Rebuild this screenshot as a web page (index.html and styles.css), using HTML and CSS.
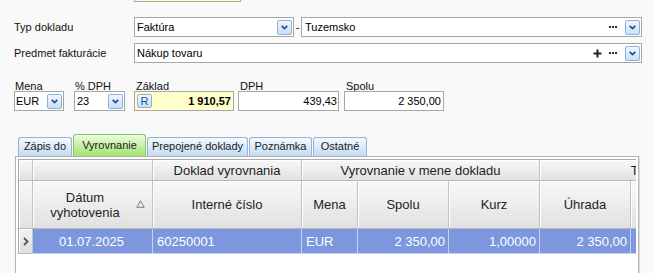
FILE: index.html
```html
<!DOCTYPE html>
<html lang="sk">
<head>
<meta charset="utf-8">
<title>Doklad</title>
<link rel="stylesheet" href="styles.css">
</head>
<body>
<div class="page">
  <div class="topbox"></div>

  <div class="frow r1">
    <div class="flabel">Typ dokladu</div>
    <div class="field w-typ">
      <span class="val">Faktúra</span>
      <span class="ddbtn"><svg width="7" height="5" viewBox="0 0 7 5"><path d="M0.7 0.8 L3.5 3.6 L6.3 0.8" fill="none" stroke="#1f4f9c" stroke-width="1.7"/></svg></span>
    </div>
    <span class="dash">-</span>
    <div class="field w-sub">
      <span class="val">Tuzemsko</span>
      <span class="dots"><svg width="8" height="2" viewBox="0 0 8 2"><rect x="0" y="0" width="2" height="2"/><rect x="3" y="0" width="2" height="2"/><rect x="6" y="0" width="2" height="2"/></svg></span>
      <span class="ddbtn"><svg width="7" height="5" viewBox="0 0 7 5"><path d="M0.7 0.8 L3.5 3.6 L6.3 0.8" fill="none" stroke="#1f4f9c" stroke-width="1.7"/></svg></span>
    </div>
  </div>

  <div class="frow r2">
    <div class="flabel">Predmet fakturácie</div>
    <div class="field w-pred">
      <span class="val">Nákup tovaru</span>
      <span class="plus"><svg width="9" height="9" viewBox="0 0 9 9"><path d="M4.5 0.5 V8.5 M0.5 4.5 H8.5" stroke="#222" stroke-width="2"/></svg></span>
      <span class="dots"><svg width="8" height="2" viewBox="0 0 8 2"><rect x="0" y="0" width="2" height="2"/><rect x="3" y="0" width="2" height="2"/><rect x="6" y="0" width="2" height="2"/></svg></span>
      <span class="ddbtn"><svg width="7" height="5" viewBox="0 0 7 5"><path d="M0.7 0.8 L3.5 3.6 L6.3 0.8" fill="none" stroke="#1f4f9c" stroke-width="1.7"/></svg></span>
    </div>
  </div>

  <div class="amounts">
    <div class="acol w-mena">
      <div class="alabel">Mena</div>
      <div class="field">
        <span class="val tight">EUR</span>
        <span class="ddbtn"><svg width="7" height="5" viewBox="0 0 7 5"><path d="M0.7 0.8 L3.5 3.6 L6.3 0.8" fill="none" stroke="#1f4f9c" stroke-width="1.7"/></svg></span>
      </div>
    </div>
    <div class="acol w-dph">
      <div class="alabel">% DPH</div>
      <div class="field">
        <span class="val">23</span>
        <span class="ddbtn"><svg width="7" height="5" viewBox="0 0 7 5"><path d="M0.7 0.8 L3.5 3.6 L6.3 0.8" fill="none" stroke="#1f4f9c" stroke-width="1.7"/></svg></span>
      </div>
    </div>
    <div class="acol w-zaklad">
      <div class="alabel">Základ</div>
      <div class="field yellow">
        <span class="rbtn">R</span>
        <span class="val num bold">1 910,57</span>
      </div>
    </div>
    <div class="acol w-dphval">
      <div class="alabel">DPH</div>
      <div class="field">
        <span class="val num">439,43</span>
      </div>
    </div>
    <div class="acol w-spolu">
      <div class="alabel">Spolu</div>
      <div class="field">
        <span class="val num">2 350,00</span>
      </div>
    </div>
  </div>

  <div class="tabs">
    <div class="tab t-zapis">Zápis do</div>
    <div class="tab active t-vyr">Vyrovnanie</div>
    <div class="tab t-prep">Prepojené doklady</div>
    <div class="tab t-pozn">Poznámka</div>
    <div class="tab t-ost">Ostatné</div>
  </div>

  <div class="panel">
    <div class="grid">
      <div class="hc ind"></div>
      <div class="hc"></div>
      <div class="hc">Doklad vyrovnania</div>
      <div class="hc span3">Vyrovnanie v mene dokladu</div>
      <div class="hc span2">Transakčná mena</div>

      <div class="hc ind"></div>
      <div class="hc sortcell">
        <span class="sorttext">Dátum<br>vyhotovenia</span>
        <span class="sortglyph"><svg width="9" height="8" viewBox="0 0 9 8"><path d="M4.5 0.8 L8.2 7.3 H0.8 Z" fill="none" stroke="#7a7a7a" stroke-width="1"/></svg></span>
      </div>
      <div class="hc">Interné číslo</div>
      <div class="hc">Mena</div>
      <div class="hc">Spolu</div>
      <div class="hc">Kurz</div>
      <div class="hc">Úhrada</div>
      <div class="hc"></div>

      <div class="hc ind rowsel"><svg width="6" height="9" viewBox="0 0 6 9"><path d="M1 1 L4.5 4.5 L1 8" fill="none" stroke="#4e5866" stroke-width="1.8"/></svg></div>
      <div class="dc center">01.07.2025</div>
      <div class="dc">60250001</div>
      <div class="dc">EUR</div>
      <div class="dc right">2 350,00</div>
      <div class="dc right">1,00000</div>
      <div class="dc right">2 350,00</div>
      <div class="dc"></div>
    </div>
  </div>
</div>
</body>
</html>
```

FILE: styles.css
```css
* { box-sizing: border-box; }

html, body {
  margin: 0;
  padding: 0;
  background: #f9f9f9;
}

body {
  font-family: "Liberation Sans", Arial, sans-serif;
  font-size: 11px;
  color: #111;
  overflow: hidden;
}

.page {
  width: 654px;
  height: 273px;
  overflow: hidden;
}

.topbox {
  margin-left: 134px;
  width: 107px;
  height: 2px;
  background: #ffffcc;
  border: 1px solid #a6a6a6;
  border-top: none;
}

.frow {
  display: flex;
  align-items: center;
  padding-left: 14px;
  height: 20px;
}

.r1 { margin-top: 15px; }
.r2 { margin-top: 6px; }

.flabel {
  width: 120px;
  flex: none;
}

.field {
  display: flex;
  align-items: center;
  height: 20px;
  border: 1px solid #a6a6a6;
  background: #fff;
  padding: 0 1px 0 2px;
  color: #000;
}

.w-typ { width: 160px; }
.w-sub { width: 341px; padding-left: 3px; }
.w-pred { width: 508px; }

.dash {
  width: 7px;
  text-align: center;
  flex: none;
}

.val {
  flex: 1;
  white-space: nowrap;
  overflow: hidden;
}

.val.tight { margin-left: -1px; }

.val.num { text-align: right; padding-right: 1px; }
.val.bold { font-weight: bold; }

.ddbtn {
  flex: none;
  width: 15px;
  height: 15px;
  border: 1px solid #8db2de;
  border-radius: 2px;
  background: linear-gradient(#f1f7fe, #c9def6);
  display: flex;
  align-items: center;
  justify-content: center;
}

.ddbtn svg { display: block; }

.dots {
  flex: none;
  display: flex;
  margin-right: 8px;
  fill: #2a2a2a;
}

.dots svg, .plus svg { display: block; }

.plus {
  flex: none;
  margin-right: 7px;
}

.amounts {
  display: flex;
  padding-left: 14px;
  margin-top: 18px;
}

.acol {
  display: flex;
  flex-direction: column;
  flex: none;
}

.alabel {
  height: 10px;
  line-height: 10px;
  padding-left: 1px;
  white-space: nowrap;
}

.w-mena { width: 50px; margin-right: 10px; }
.w-dph { width: 51px; margin-right: 9px; }
.w-zaklad { width: 100px; margin-right: 4px; }
.w-zaklad .alabel { padding-left: 2px; }
.w-dphval { width: 101px; margin-right: 5px; }
.w-dphval .alabel, .w-spolu .alabel { padding-left: 2px; }
.w-spolu { width: 100px; }

.w-dphval .val.num { padding-right: 0; }

.field.yellow {
  background: #ffffc9;
  padding-left: 2px;
}

.rbtn {
  flex: none;
  width: 15px;
  height: 14px;
  border: 1px solid #8db2de;
  border-radius: 2px;
  background: linear-gradient(#f1f7fe, #c9def6);
  color: #1f4f9c;
  font-size: 11px;
  line-height: 12px;
  text-align: center;
}

.tabs {
  display: flex;
  align-items: flex-end;
  gap: 1px;
  margin-top: 23px;
  padding-left: 18px;
  height: 22px;
}

.tab {
  flex: none;
  height: 19px;
  border: 1px solid #93b3d8;
  border-bottom: none;
  border-radius: 3px 3px 0 0;
  background: linear-gradient(#f4f9fe, #c3dbf4);
  color: #1c1c1c;
  line-height: 17px;
  text-align: center;
  white-space: nowrap;
}

.tab.active {
  height: 22px;
  line-height: 20px;
  border-color: #86c66a;
  background: linear-gradient(#eefbe4, #b6eb8e 70%, #a3e476);
}

.t-zapis { width: 54px; }
.t-vyr { width: 73px; }
.t-prep { width: 101px; }
.t-pozn { width: 63px; }
.t-ost { width: 54px; }

.panel {
  margin-left: 15px;
  width: 624px;
  height: 140px;
  border: 1px solid #b3b3b3;
  padding: 2px;
  background: #fff;
  box-shadow: 1px 0 0 #dcdcdc;
}

.grid {
  display: grid;
  grid-template-columns: 14px 120px 149px 56px 91px 91px 91px 195px;
  grid-template-rows: 21px 48px 25px;
  width: 618px;
  overflow: hidden;
  border-left: 1px solid #a9a9a9;
  border-top: 1px solid #a9a9a9;
  font-size: 13px;
}

.hc {
  display: flex;
  align-items: center;
  justify-content: center;
  text-align: center;
  border-right: 1px solid #c2c2c2;
  border-bottom: 1px solid #b9b9b9;
  background: linear-gradient(#f8f8f8, #e1e1e1);
  box-shadow: inset 1px 1px 0 #ffffff;
  color: #1e1e1e;
  white-space: nowrap;
  line-height: 15px;
}

.span3 { grid-column: span 3; }
.span2 { grid-column: span 2; }

.sortcell {
  justify-content: flex-start;
}

.sorttext {
  flex: 1;
  text-align: center;
  padding-left: 2px;
}

.sortglyph {
  flex: none;
  width: 17px;
  display: flex;
  align-items: center;
  padding-left: 1px;
  margin-top: -1px;
}

.rowsel {
  background: linear-gradient(#f2f2f2, #dedede);
}

.dc {
  display: flex;
  align-items: center;
  background: #7c97dd;
  color: #fff;
  border-right: 1px solid #c8d2ee;
  border-bottom: 1px solid #c8d2ee;
  padding: 0 3px 0 4px;
  white-space: nowrap;
}

.dc.center { justify-content: center; padding-left: 0; padding-right: 2px; }
.dc.right { justify-content: flex-end; }
```
